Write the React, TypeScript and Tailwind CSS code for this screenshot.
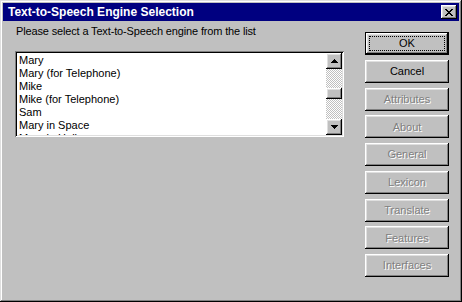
const raised =
  "bg-[#c0c0c0] shadow-[inset_-1px_-1px_#000,inset_1px_1px_#fff,inset_-2px_-2px_#808080,inset_2px_2px_#dfdfdf]"

const voices = ["Mary", "Mary (for Telephone)", "Mike", "Mike (for Telephone)", "Sam", "Mary in Space", "Mary in Hall"]

function Arrow({ down }: { down?: boolean }) {
  return (
    <svg width="7" height="4" viewBox="0 0 7 4" shapeRendering="crispEdges">
      <path d={down ? "M0 0H7L3.5 4Z" : "M0 4H7L3.5 0Z"} fill="#000" />
    </svg>
  )
}

function Button({ label, disabled }: { label: string; disabled?: boolean }) {
  return (
    <div
      className={`h-[23px] w-[84px] flex items-center justify-center ${raised} ${
        disabled ? "text-[#808080] [text-shadow:1px_1px_0_#fff]" : "text-black"
      }`}
    >
      {label}
    </div>
  )
}

export default function App() {
  return (
    <div className="w-[462px] h-[302px] bg-[#c0c0c0] p-[3px] flex flex-col text-[11px] text-black font-['Liberation_Sans',Arial,sans-serif] shadow-[inset_-1px_-1px_#000,inset_1px_1px_#dfdfdf,inset_-2px_-2px_#808080,inset_2px_2px_#fff]">
      {/* title bar */}
      <div className="h-[18px] bg-[#000080] flex items-center pl-[5px] pr-[2px] text-white font-bold text-[12px]">
        <span>Text-to-Speech Engine Selection</span>
        <div className={`ml-auto w-[16px] h-[14px] flex items-center justify-center ${raised}`}>
          <svg width="8" height="7" viewBox="0 0 8 7" shapeRendering="crispEdges">
            <path
              d="M0 0h2v1h1v1h2V1h1V0h2v1H7v1H6v1H5v1h1v1h1v1h1v1H6V6H5V5H3v1H2v1H0V6h1V5h1V4h1V3H2V2H1V1H0Z"
              fill="#000"
            />
          </svg>
        </div>
      </div>

      <div className="flex flex-1 pl-[12px]">
        {/* left: label and list */}
        <div className="w-[329px] pt-[4px] flex flex-col">
          <div className="leading-[13px] pl-[1px] tracking-[-0.15px]">Please select a Text-to-Speech engine from the list</div>
          <div className="mt-[13px] h-[86px] bg-white p-[2px] flex shadow-[inset_1px_1px_#808080,inset_-1px_-1px_#fff,inset_2px_2px_#000,inset_-2px_-2px_#dfdfdf]">
            <div className="flex-1 overflow-hidden pt-[1px] pl-[2px] leading-[13px]">
              {voices.map((v) => (
                <div key={v}>{v}</div>
              ))}
            </div>
            <div className="w-[16px] flex flex-col">
              <div className={`h-[16px] flex items-center justify-center ${raised}`}>
                <Arrow />
              </div>
              <div className="flex-1 bg-[image:repeating-conic-gradient(#c0c0c0_0%_25%,#ffffff_0%_50%)] bg-[length:2px_2px]">
                <div className={`mt-[19px] h-[11px] ${raised}`} />
              </div>
              <div className={`h-[16px] flex items-center justify-center ${raised}`}>
                <Arrow down />
              </div>
            </div>
          </div>
        </div>

        {/* right: buttons */}
        <div className="ml-[21px] pt-[11px] flex flex-col gap-[4.75px]">
          <div className="h-[23px] w-[84px] border border-black flex p-[3px] bg-[#c0c0c0] shadow-[inset_-1px_-1px_#000,inset_1px_1px_#fff,inset_-2px_-2px_#808080,inset_2px_2px_#dfdfdf]">
            <span className="flex-1 border border-dotted border-black flex items-center justify-center">OK</span>
          </div>
          <Button label="Cancel" />
          <Button label="Attributes" disabled />
          <Button label="About" disabled />
          <Button label="General" disabled />
          <Button label="Lexicon" disabled />
          <Button label="Translate" disabled />
          <Button label="Features" disabled />
          <Button label="Interfaces" disabled />
        </div>
      </div>
    </div>
  )
}
